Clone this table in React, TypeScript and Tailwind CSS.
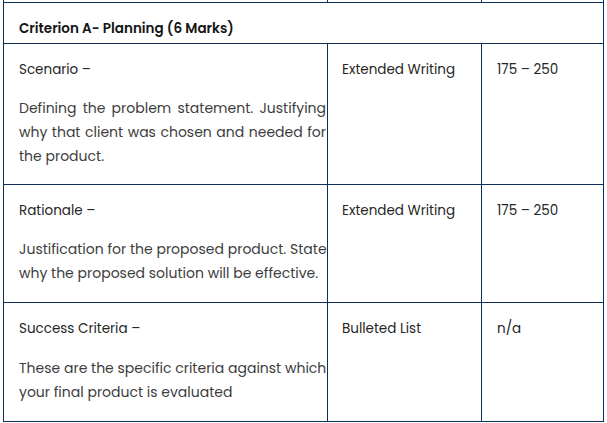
const line = "border-[#0d2f57]";

type Row = {
  title: string;
  lines: string[];
  kind: string;
  words: string;
};

const rows: Row[] = [
  {
    title: "Scenario –",
    lines: ["Defining the problem statement. Justifying", "why that client was chosen and needed for", "the product."],
    kind: "Extended Writing",
    words: "175 – 250",
  },
  {
    title: "Rationale –",
    lines: ["Justification for the proposed product. State", "why the proposed solution will be effective."],
    kind: "Extended Writing",
    words: "175 – 250",
  },
  {
    title: "Success Criteria –",
    lines: ["These are the specific criteria against which", "your final product is evaluated"],
    kind: "Bulleted List",
    words: "n/a",
  },
];

function Description({ lines, gap }: { lines: string[]; gap: string }) {
  return (
    <div className={`${gap} text-[14px] leading-[24px] text-[#3d3d3d]`}>
      {lines.map((l, i) => (
        <div
          key={i}
          className={i < lines.length - 1 ? "whitespace-nowrap text-justify [text-align-last:justify]" : "whitespace-nowrap"}
        >
          {l}
        </div>
      ))}
    </div>
  );
}

export default function App() {
  return (
    <div className="w-[607px] h-[423px] bg-white overflow-hidden font-['Poppins','Inter',sans-serif]">
      <div className={`ml-[3px] w-[601px] border-l border-r ${line}`}>
        <div className="grid grid-cols-[323px_154px_1fr] h-[2px]">
          <div />
          <div className={`border-l ${line}`} />
          <div className={`border-l ${line}`} />
        </div>
        <div className={`border-t ${line} pl-[15px] pt-[14px] pb-[2px] text-[13.5px] leading-[24px] font-semibold text-[#141414]`}>
          Criterion A- Planning (6 Marks)
        </div>
        {rows.map((r, i) => (
          <div
            key={i}
            className={`grid grid-cols-[323px_154px_1fr] border-t ${line} ${i === rows.length - 1 ? "border-b" : ""} text-[13.5px] leading-[24px] text-[#262626]`}
          >
            <div className={`pl-[15px] pr-[1px] pt-[14px] ${i === 0 ? "pb-[16px]" : "pb-[17px]"}`}>
              <div>{r.title}</div>
              <Description lines={r.lines} gap={i === 2 ? "mt-[15px]" : "mt-[14px]"} />
            </div>
            <div className={`border-l ${line} pl-[14px] pt-[14px]`}>{r.kind}</div>
            <div className={`border-l ${line} pl-[15px] pt-[14px]`}>{r.words}</div>
          </div>
        ))}
      </div>
    </div>
  );
}
